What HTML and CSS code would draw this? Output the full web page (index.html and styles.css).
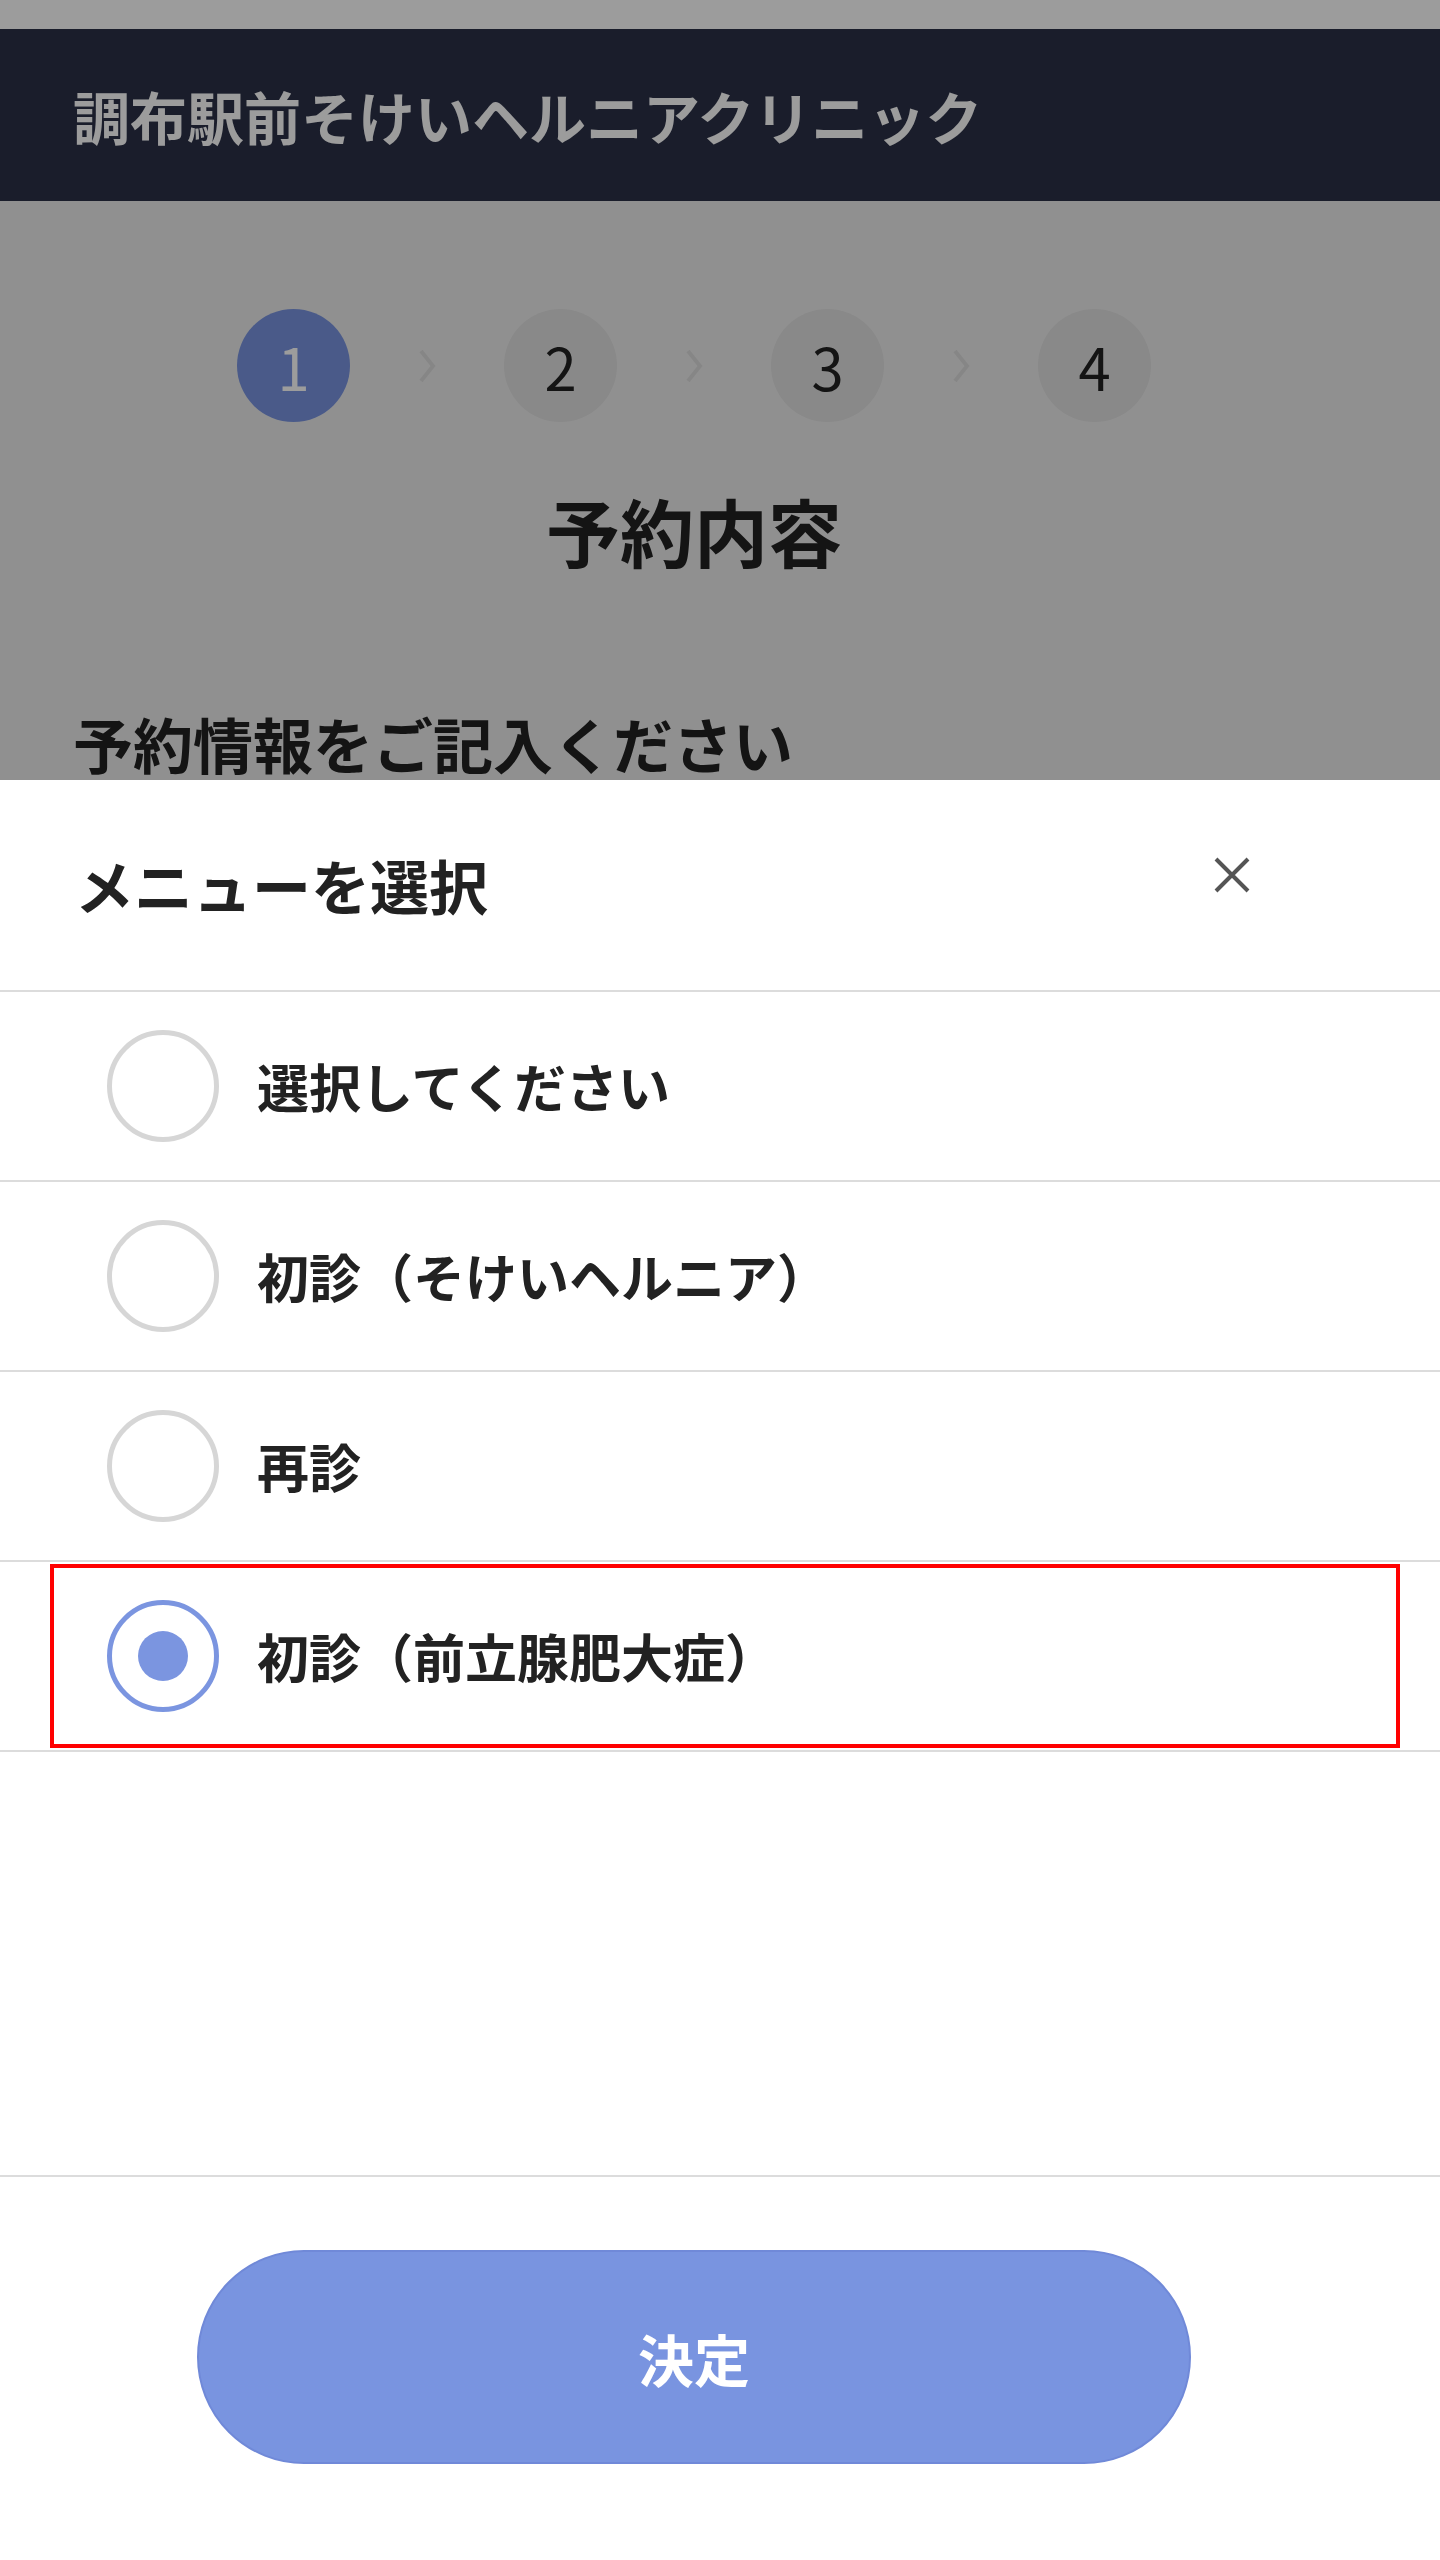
FILE: index.html
```html
<!DOCTYPE html>
<html lang="ja">
<head>
    <meta charset="UTF-8">
    <meta name="viewport" content="width=device-width, initial-scale=1.0">
    <title>予約内容 - 調布駅前そけいヘルニアクリニック</title>
    <link rel="stylesheet" href="styles.css">
</head>
<body>
    <div class="page">
        <div class="status-bar"></div>
        <header class="site-header">
            <h1>調布駅前そけいヘルニアクリニック</h1>
        </header>

        <main class="content">
            <ol class="steps">
                <li class="step active">1</li>
                <li class="step-arrow"><svg width="20" height="36" viewBox="0 0 20 36"><polyline points="4,3 16,18 4,33" fill="none" stroke="#dcdcdc" stroke-width="4"/></svg></li>
                <li class="step">2</li>
                <li class="step-arrow"><svg width="20" height="36" viewBox="0 0 20 36"><polyline points="4,3 16,18 4,33" fill="none" stroke="#dcdcdc" stroke-width="4"/></svg></li>
                <li class="step">3</li>
                <li class="step-arrow"><svg width="20" height="36" viewBox="0 0 20 36"><polyline points="4,3 16,18 4,33" fill="none" stroke="#dcdcdc" stroke-width="4"/></svg></li>
                <li class="step">4</li>
            </ol>
            <h2 class="page-title">予約内容</h2>
            <h3 class="section-title">予約情報をご記入ください</h3>
        </main>
    </div>

    <!-- menu select bottom sheet -->
    <div class="overlay"></div>
    <div class="sheet">
        <div class="sheet-header">
            <h2>メニューを選択</h2>
            <button class="sheet-close" aria-label="閉じる">
                <svg width="38" height="38" viewBox="0 0 38 38"><path d="M3 3 L35 35 M35 3 L3 35" stroke="#555" stroke-width="4" fill="none"/></svg>
            </button>
        </div>

        <ul class="options">
            <li class="option"><span class="radio"></span><span class="option-label">選択してください</span></li>
            <li class="option"><span class="radio"></span><span class="option-label">初診（そけいヘルニア）</span></li>
            <li class="option"><span class="radio"></span><span class="option-label">再診</span></li>
            <li class="option selected"><span class="radio"></span><span class="option-label">初診（前立腺肥大症）</span></li>
        </ul>

        <div class="sheet-footer">
            <button class="submit-button">決定</button>
        </div>
    </div>
</body>
</html>
```

FILE: styles.css
```css
body {
    font-family: "Noto Sans CJK JP", "Noto Sans", sans-serif;
    margin: 0;
    padding: 0;
    width: 1440px;
    height: 2560px;
    overflow: hidden;
    background-color: #ececec;
    color: #222;
}
.status-bar {
    height: 29px;
    background-color: white;
}
.site-header {
    height: 172px;
    background-color: #2b3047;
    display: flex;
    align-items: center;
    padding-left: 73px;
}
.site-header h1 {
    margin: 0;
    color: white;
    font-size: 57px;
    font-weight: 700;
    line-height: 1;
}
.content {
    width: 1388px;
}
.steps {
    list-style: none;
    margin: 108px 0 0;
    padding: 0;
    display: flex;
    justify-content: center;
    align-items: center;
    gap: 67px;
}
.step {
    width: 113px;
    height: 113px;
    border-radius: 50%;
    background-color: #e0e0e0;
    color: #222;
    display: flex;
    align-items: center;
    justify-content: center;
    font-size: 58px;
    font-weight: 400;
    line-height: 1;
}
.step.active {
    background-color: #7994e0;
    color: white;
}
.step-arrow {
    width: 20px;
    display: flex;
}
.page-title {
    margin: 54px 0 0;
    text-align: center;
    font-size: 74px;
    font-weight: 700;
    line-height: 108px;
}
.section-title {
    margin: 114px 0 0 73px;
    font-size: 60px;
    font-weight: 700;
    line-height: 90px;
}

/* bottom sheet */
.overlay {
    position: fixed;
    top: 0;
    left: 0;
    right: 0;
    bottom: 0;
    background-color: rgba(0, 0, 0, 0.39);
}
.sheet {
    position: fixed;
    top: 780px;
    left: 0;
    right: 0;
    bottom: 0;
    background-color: white;
    display: flex;
    flex-direction: column;
}
.sheet-header {
    height: 210px;
    border-bottom: 2px solid #dcdcdc;
    display: flex;
    align-items: center;
    justify-content: space-between;
    padding: 0 189px 0 75px;
}
.sheet-header h2 {
    margin: 0;
    font-size: 59px;
    font-weight: 700;
    line-height: 1.5;
}
.sheet-close {
    border: none;
    background: none;
    padding: 0;
    margin-bottom: 20px;
    display: flex;
    cursor: pointer;
}
.options {
    list-style: none;
    margin: 0;
    padding: 0;
}
.option {
    position: relative;
    height: 188px;
    border-bottom: 2px solid #dcdcdc;
    display: flex;
    align-items: center;
    padding-left: 107px;
}
.radio {
    box-sizing: border-box;
    width: 112px;
    height: 112px;
    border: 5px solid #d6d6d6;
    border-radius: 50%;
    display: flex;
    align-items: center;
    justify-content: center;
    margin-right: 38px;
}
.option-label {
    font-size: 52px;
    font-weight: 700;
    line-height: 1.5;
}
.option.selected .radio {
    border-color: #7b95e0;
}
.option.selected .radio::after {
    content: "";
    width: 50px;
    height: 50px;
    border-radius: 50%;
    background-color: #7b95e0;
}
.option.selected::after {
    content: "";
    position: absolute;
    left: 50px;
    right: 40px;
    top: 2px;
    bottom: 2px;
    border: 4px solid #ff0000;
}
.sheet-footer {
    margin-top: auto;
    border-top: 2px solid #dcdcdc;
    padding: 73px 52px 96px 0;
    display: flex;
    justify-content: center;
}
.submit-button {
    width: 994px;
    height: 214px;
    border: 2px solid #7089d8;
    border-radius: 107px;
    background-color: #7994e0;
    color: white;
    font-family: inherit;
    font-size: 56px;
    font-weight: 700;
    cursor: pointer;
}
```
